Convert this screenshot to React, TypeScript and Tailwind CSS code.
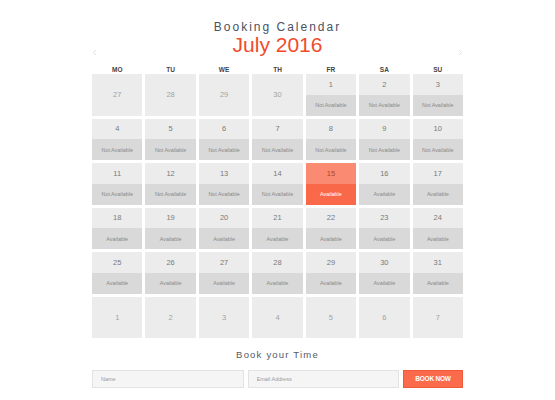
import { ChevronLeft, ChevronRight } from "lucide-react";

type Day = { n: number; kind: "other" | "na" | "av" | "sel" };

const days = ["MO", "TU", "WE", "TH", "FR", "SA", "SU"];

const buildWeeks = (): Day[][] => {
  const cells: Day[] = [];
  [27, 28, 29, 30].forEach((n) => cells.push({ n, kind: "other" }));
  for (let n = 1; n <= 31; n++) {
    if (n <= 14) cells.push({ n, kind: "na" });
    else if (n === 15) cells.push({ n, kind: "sel" });
    else cells.push({ n, kind: "av" });
  }
  for (let n = 1; n <= 7; n++) cells.push({ n, kind: "other" });
  const weeks: Day[][] = [];
  for (let i = 0; i < cells.length; i += 7) weeks.push(cells.slice(i, i + 7));
  return weeks;
};

const Cell = ({ day }: { day: Day }) => {
  if (day.kind === "other") {
    return (
      <div className="h-[41.5px] bg-[#ececec] flex items-center justify-center text-[7.5px] text-[#a3a3a3]">
        {day.n}
      </div>
    );
  }
  const sel = day.kind === "sel";
  return (
    <div className="h-[41.5px] flex flex-col">
      <div
        className={
          sel
            ? "flex-1 bg-[#fb8a72] flex items-center justify-center text-[7.5px] text-[#a8482f]"
            : "flex-1 bg-[#ececec] flex items-center justify-center text-[7.5px] text-[#7a7a7a]"
        }
      >
        {day.n}
      </div>
      <div
        className={
          sel
            ? "flex-1 bg-[#fa684a] flex items-center justify-center text-[5.4px] text-white"
            : "flex-1 bg-[#d9d9d9] flex items-center justify-center text-[5.4px] text-[#8a8a8a]"
        }
      >
        {day.kind === "na" ? "Not Available" : "Available"}
      </div>
    </div>
  );
};

const App = () => {
  const weeks = buildWeeks();

  return (
    <div className="w-[555px] h-[400px] bg-white font-['Liberation_Sans',Arial,sans-serif]">
      <div className="w-[371px] mx-auto pt-[20px]">
        <div className="h-[14px] leading-[14px] text-[12px] tracking-[2px] text-center text-[#4b5161]">
          Booking Calendar
        </div>
        <div className="h-[22px] flex items-center justify-between">
          <ChevronLeft size={9} strokeWidth={1.5} className="text-[#c8c8c8] mt-[15px] -ml-[2px]" />
          <div className="leading-[22px] text-[21px] text-[#f24b2c]">July 2016</div>
          <ChevronRight size={9} strokeWidth={1.5} className="text-[#c8c8c8] mt-[15px] -mr-[2px]" />
        </div>
        <div className="grid grid-cols-7 gap-x-[3px] h-[18px] pt-[10px]">
          {days.map((d) => (
            <div key={d} className="text-center text-[6.5px] leading-[7px] font-bold text-[#444]">
              {d}
            </div>
          ))}
        </div>
        <div className="grid grid-cols-7 gap-[3px]">
          {weeks.map((w, i) => w.map((d, j) => <Cell key={`${i}-${j}`} day={d} />))}
        </div>
        <div className="mt-[12px] h-[10px] leading-[10px] text-center text-[9.5px] tracking-[1.2px] text-[#555a66]">
          Book your Time
        </div>
        <div className="mt-[10px] flex gap-[4px] h-[18px]">
          <input
            placeholder="Name"
            className="flex-1 min-w-0 bg-[#f5f5f5] border border-[#e3e3e3] px-[8px] text-[5.5px] outline-none placeholder:text-[#9a9a9a]"
          />
          <input
            placeholder="Email Address"
            className="flex-1 min-w-0 bg-[#f5f5f5] border border-[#e3e3e3] px-[8px] text-[5.5px] outline-none placeholder:text-[#9a9a9a]"
          />
          <button className="w-[60px] bg-[#fa6a4b] border border-[#ee5a3b] text-white text-[6.5px] font-bold tracking-[-0.2px]">
            BOOK NOW
          </button>
        </div>
      </div>
    </div>
  );
};

export default App;
